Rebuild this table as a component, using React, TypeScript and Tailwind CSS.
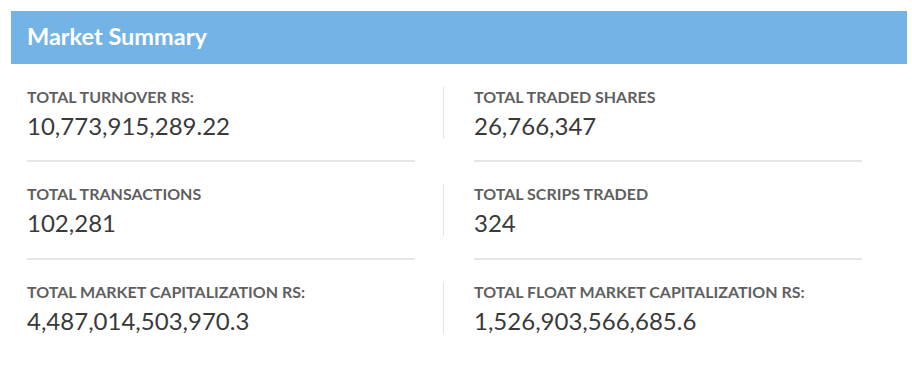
import React from "react";

type Item = { label: string; value: string };

const rows: [Item, Item][] = [
  [
    { label: "TOTAL TURNOVER RS:", value: "10,773,915,289.22" },
    { label: "TOTAL TRADED SHARES", value: "26,766,347" },
  ],
  [
    { label: "TOTAL TRANSACTIONS", value: "102,281" },
    { label: "TOTAL SCRIPS TRADED", value: "324" },
  ],
  [
    { label: "TOTAL MARKET CAPITALIZATION RS:", value: "4,487,014,503,970.3" },
    { label: "TOTAL FLOAT MARKET CAPITALIZATION RS:", value: "1,526,903,566,685.6" },
  ],
];

function Stat({ item }: { item: Item }) {
  return (
    <div className="h-[52px]">
      <div className="text-[16px] leading-[20px] font-bold text-[#5f5f5f] whitespace-nowrap">{item.label}</div>
      <div className="mt-[4px] text-[24px] leading-[30px] text-[#3a3a3a] whitespace-nowrap">{item.value}</div>
    </div>
  );
}

export default function App() {
  return (
    <div className="w-[912px] h-[378px] bg-white pt-[11px] pl-[11px] font-['Lato',sans-serif]">
      <div className="w-[896px] h-[53px] bg-[#73b3e6] pt-[11px] pl-[16px]">
        <div className="text-white text-[23.5px] font-bold leading-[28px]">Market Summary</div>
      </div>
      <div className="flex flex-col">
        {rows.map((row, i) => {
          const last = i === rows.length - 1;
          const pt = i === 0 ? "pt-[23px]" : "pt-[22px]";
          const pb = i === 0 ? "pb-[21px]" : "pb-[22px]";
          return (
            <div key={i} className="flex">
              <div className="ml-[16px] w-[388px] flex flex-col">
                <div className={`${pt} ${pb}`}>
                  <Stat item={row[0]} />
                </div>
                {!last && <div className="h-[2px] bg-[#e6e6e6]" />}
              </div>
              <div className="ml-[28px] flex flex-col">
                <div className={`${pt} ${pb}`}>
                  <div className="border-l border-[#e3e3e3] pl-[30px]">
                    <Stat item={row[1]} />
                  </div>
                </div>
                {!last && <div className="ml-[31px] w-[388px] h-[2px] bg-[#e6e6e6]" />}
              </div>
            </div>
          );
        })}
      </div>
    </div>
  );
}
